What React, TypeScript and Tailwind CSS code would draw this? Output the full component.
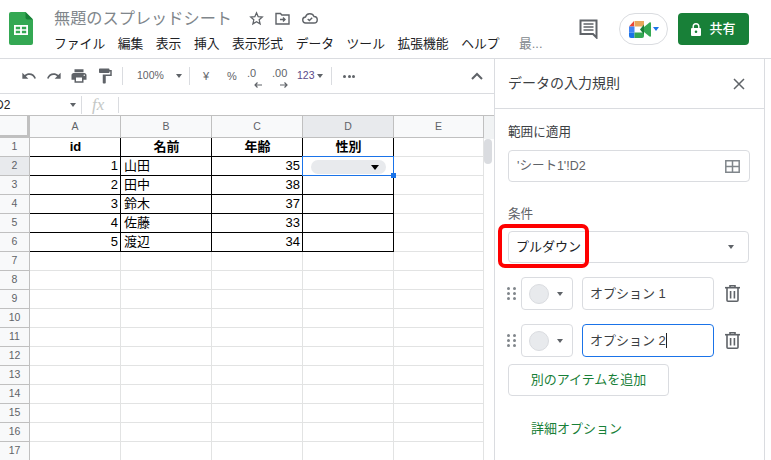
import React from "react";

const menus = ["ファイル", "編集", "表示", "挿入", "表示形式", "データ", "ツール", "拡張機能", "ヘルプ"];
const cols = ["A", "B", "C", "D", "E"];
const people: [string, string, string, string][] = [
  ["id", "名前", "年齢", "性別"],
  ["1", "山田", "35", ""],
  ["2", "田中", "38", ""],
  ["3", "鈴木", "37", ""],
  ["4", "佐藤", "33", ""],
  ["5", "渡辺", "34", ""],
];
const rowNums = Array.from({ length: 17 }, (_, i) => i + 1);

function Icon({ d, size = 16, className = "" }: { d: string; size?: number; className?: string }) {
  return (
    <svg width={size} height={size} viewBox="0 0 24 24" fill="currentColor" className={className}>
      <path d={d} />
    </svg>
  );
}

function Caret({ className = "" }: { className?: string }) {
  return <div className={`h-0 w-0 border-x-[3.5px] border-t-[4px] border-x-transparent ${className}`}></div>;
}

function SheetsLogo() {
  return (
    <svg width="24" height="33" viewBox="0 0 24 33">
      <path d="M2 0h14.5L24 7.5V31a2 2 0 0 1-2 2H2a2 2 0 0 1-2-2V2a2 2 0 0 1 2-2z" fill="#34a853" />
      <path d="M16.5 0L24 7.5h-5.5a2 2 0 0 1-2-2z" fill="#188038" />
      <path d="M5 13h14v10H5zm1.8 1.8v2.4h4.3v-2.4zm6.1 0v2.4h4.3v-2.4zm-6.1 4v2.4h4.3v-2.4zm6.1 0v2.4h4.3v-2.4z" fill="#fff" fillRule="evenodd" />
    </svg>
  );
}

function MeetLogo() {
  return (
    <svg width="22" height="17" viewBox="0 0 22 17">
      <path d="M5 0h10v5.5H5.5V0z" fill="#e8a75c" />
      <path d="M5 0v5.5H0z" fill="#ea4335" />
      <path d="M0 5.5h5.5v6H0z" fill="#4285f4" />
      <path d="M0 11.5h5.5V17H2a2 2 0 0 1-2-2z" fill="#1a73e8" />
      <path d="M5.5 11.5H15V15a2 2 0 0 1-2 2H5.5z" fill="#34a853" />
      <path d="M15 3.5v10l-4-5z" fill="#188038" />
      <path d="M15 6l5.5-4.5c.6-.4 1.5 0 1.5.8v12.4c0 .8-.9 1.2-1.5.8L15 11z" fill="#34a853" />
    </svg>
  );
}

function Trash() {
  return (
    <svg width="15" height="17" viewBox="0 0 15 17" fill="none" stroke="#5f6368" strokeWidth="1.6">
      <path d="M0 2.7h15" />
      <path d="M5 2.5V.8h5v1.7" />
      <path d="M2 3v12.2c0 .6.4 1 1 1h9c.6 0 1-.4 1-1V3" />
      <path d="M5.6 6v7.5M9.4 6v7.5" />
    </svg>
  );
}

function Dots() {
  return (
    <div className="grid w-[9px] grid-cols-2 gap-x-[2px] gap-y-[2px]">
      {[0, 1, 2, 3, 4, 5].map((i) => (
        <div key={i} className="h-[3px] w-[3px] rounded-full bg-[#80868b]"></div>
      ))}
    </div>
  );
}

function OptionRow({ label, focused }: { label: string; focused?: boolean }) {
  return (
    <div className="flex h-[33px] items-center pl-[12px]">
      <Dots />
      <div className="ml-[5px] flex h-[33px] w-[52px] items-center rounded-[4px] border border-[#dadce0] pl-[7px]">
        <div className="h-[20px] w-[20px] rounded-full border border-[#dadce0] bg-[#e8eaed]"></div>
        <Caret className="ml-[8px] border-t-[#5f6368]" />
      </div>
      <div
        className={`ml-[9px] flex h-[33px] w-[132px] items-center rounded-[4px] border pl-[7px] text-[13px] text-[#3c4043] ${
          focused ? "border-[#1a73e8]" : "border-[#dadce0]"
        }`}
      >
        {label}
        {focused && <div className="h-[15px] w-px bg-[#202124]"></div>}
      </div>
      <div className="ml-[11px]">
        <Trash />
      </div>
    </div>
  );
}

function Header() {
  return (
    <div className="flex h-[58px] shrink-0 items-start bg-white">
      <div className="ml-[9px] mt-[12px]">
        <SheetsLogo />
      </div>
      <div className="ml-[21px] flex-1">
        <div className="mt-[7px] flex h-[22px] items-center">
          <span className="text-[16.2px] leading-[22px] text-[#80868b]">無題のスプレッドシート</span>
          <svg width="15" height="15" viewBox="0 0 24 24" fill="none" stroke="#5f6368" strokeWidth="2" className="ml-[17px]">
            <path d="M12 3l2.7 6.1 6.6.6-5 4.4 1.5 6.5L12 17.2l-5.8 3.4 1.5-6.5-5-4.4 6.6-.6z" />
          </svg>
          <svg width="15" height="13" viewBox="0 0 15 13" fill="none" stroke="#5f6368" strokeWidth="1.4" className="ml-[11px]">
            <path d="M1 1.5h4.5l1.3 1.5H14v9H1z" />
            <path d="M5 7.5h4.5M8 5.5l2 2-2 2" />
          </svg>
          <svg width="16" height="12" viewBox="0 0 16 12" fill="none" stroke="#5f6368" strokeWidth="1.4" className="ml-[12px]">
            <path d="M4 11a3 3 0 0 1-.5-6A4.5 4.5 0 0 1 12 4.5a3.2 3.2 0 0 1 0 6.5z" />
            <path d="M5.7 7l1.7 1.5 2.8-2.8" />
          </svg>
        </div>
        <div className="mt-[5px] flex h-[20px] items-center gap-[12.5px] text-[12.8px] leading-[20px] text-[#202124]">
          {menus.map((m) => (
            <span key={m}>{m}</span>
          ))}
          <span className="ml-[7px] text-[#80868b]">最...</span>
        </div>
      </div>
      <div className="mt-[13px] flex items-center">
        <svg width="20" height="20" viewBox="0 0 20 20" fill="none">
          <path d="M1.5 1.5h16v17l-3.5-3.5H1.5z" stroke="#5f6368" strokeWidth="2" />
          <path d="M4.5 5h10M4.5 8h10M4.5 11h10" stroke="#5f6368" strokeWidth="1.5" />
        </svg>
        <div className="ml-[20px] flex h-[32px] w-[49px] items-center rounded-full border border-[#dadce0] pl-[9px]">
          <MeetLogo />
          <Caret className="ml-[2px] border-t-[#1a73e8]" />
        </div>
        <div className="ml-[10px] mr-[22px] flex h-[32px] w-[71px] items-center justify-center gap-[8px] rounded-[4px] bg-[#188038] text-[13px] font-medium text-white">
          <svg width="10" height="13" viewBox="0 0 10 13" fill="#fff">
            <path d="M1.5 5V3.5a3.5 3.5 0 0 1 7 0V5h.5a1 1 0 0 1 1 1v6a1 1 0 0 1-1 1H1a1 1 0 0 1-1-1V6a1 1 0 0 1 1-1zm1.4 0h4.2V3.5a2.1 2.1 0 0 0-4.2 0zM5 7.5a1.3 1.3 0 1 0 0 2.6 1.3 1.3 0 0 0 0-2.6z" fillRule="evenodd" />
          </svg>
          共有
        </div>
      </div>
    </div>
  );
}

function Arrow({ flip }: { flip?: boolean }) {
  return (
    <svg width="8" height="6" viewBox="0 0 8 6" fill="none" stroke="#5f6368" strokeWidth="1.2" className={`ml-auto ${flip ? "-scale-x-100" : ""}`}>
      <path d="M8 3H1M3.5.5L1 3l2.5 2.5" />
    </svg>
  );
}

function Toolbar() {
  return (
    <div className="flex h-[35px] shrink-0 items-center border-b border-[#dadce0] pl-[21px] text-[#5f6368]">
      <Icon size={16} d="M12.5 8c-2.65 0-5.05.99-6.9 2.6L2 7v9h9l-3.62-3.62c1.39-1.16 3.16-1.88 5.12-1.88 3.54 0 6.55 2.31 7.6 5.5l2.37-.78C21.08 11.03 17.15 8 12.5 8z" />
      <Icon size={16} className="ml-[9px]" d="M18.4 10.6C16.55 8.99 14.15 8 11.5 8c-4.65 0-8.58 3.03-9.96 7.22L3.9 16c1.05-3.19 4.05-5.5 7.6-5.5 1.95 0 3.73.72 5.12 1.88L13 16h9V7l-3.6 3.6z" />
      <Icon size={18} className="ml-[8px]" d="M19 8H5c-1.66 0-3 1.34-3 3v6h4v4h12v-4h4v-6c0-1.66-1.34-3-3-3zm-3 11H8v-5h8v5zm3-7c-.55 0-1-.45-1-1s.45-1 1-1 1 .45 1 1-.45 1-1 1zm-1-9H6v4h12V3z" />
      <Icon size={18} className="ml-[8px]" d="M18 4V3c0-.55-.45-1-1-1H5c-.55 0-1 .45-1 1v4c0 .55.45 1 1 1h12c.55 0 1-.45 1-1V6h1v4H9v11c0 .55.45 1 1 1h2c.55 0 1-.45 1-1v-9h8V4h-3z" />
      <div className="ml-[8px] h-[18px] w-px bg-[#dadce0]"></div>
      <span className="ml-[14px] w-[27px] text-[10.5px]">100%</span>
      <Caret className="ml-[12px] border-t-[#5f6368]" />
      <div className="ml-[7px] h-[18px] w-px bg-[#dadce0]"></div>
      <span className="ml-[11px] w-[10px] text-center text-[11px]">¥</span>
      <span className="ml-[15px] w-[12px] text-center text-[11px]">%</span>
      <div className="ml-[9px] flex h-[24px] w-[15px] flex-col text-[11px] leading-[18px]">
        <span>.0</span>
        <Arrow />
      </div>
      <div className="ml-[10px] flex h-[24px] w-[16px] flex-col text-[11px] leading-[18px]">
        <span>.00</span>
        <Arrow flip />
      </div>
      <span className="ml-[9px] w-[18px] text-[10.5px] text-[#5b4a8a]">123</span>
      <Caret className="ml-[2px] border-t-[#5f6368]" />
      <div className="ml-[8px] h-[18px] w-px bg-[#dadce0]"></div>
      <div className="ml-[11px] flex gap-[1.5px]">
        {[0, 1, 2].map((i) => (
          <div key={i} className="h-[3px] w-[3px] rounded-full bg-[#5f6368]"></div>
        ))}
      </div>
      <svg width="12" height="8" viewBox="0 0 12 8" fill="none" stroke="#5f6368" strokeWidth="2" className="ml-[116px]">
        <path d="M1 7l5-5 5 5" />
      </svg>
    </div>
  );
}

function FormulaBar() {
  return (
    <div className="flex h-[22px] shrink-0 items-center border-b border-[#c0c0c0] text-[12px] text-[#202124]">
      <div className="flex w-[82px] items-center overflow-hidden border-r border-[#dadce0]">
        <span className="-ml-[5px] w-[75px] leading-[18px]">D2</span>
        <Caret className="border-t-[#5f6368]" />
      </div>
      <span className="ml-[10px] w-[26px] font-['Liberation_Serif',serif] text-[17px] italic leading-[18px] text-[#c4c7c5]">fx</span>
      <div className="h-[16px] w-px bg-[#dadce0]"></div>
    </div>
  );
}

function SheetGrid() {
  return (
    <div className="flex min-h-0 flex-1 overflow-hidden">
      <div className="grid flex-1 grid-cols-[30px_91px_91px_91px_91px_90px] grid-rows-[22px] auto-rows-[19px] content-start">
        <div className="border-b-[3px] border-r-[3px] border-[#c0c0c0] bg-[#f8f9fa]"></div>
        {cols.map((c) => (
          <div
            key={c}
            className={`flex items-center justify-center border-b border-r border-[#c0c0c0] text-[10.5px] text-[#5f6368] ${
              c === "D" ? "bg-[#e8eaed]" : "bg-[#f8f9fa]"
            }`}
          >
            {c}
          </div>
        ))}
        {rowNums.map((n) => (
          <React.Fragment key={n}>
            <div
              className={`flex items-center justify-center border-b border-r border-[#c0c0c0] text-[10.5px] text-[#5f6368] ${
                n === 2 ? "bg-[#e8eaed]" : "bg-[#f8f9fa]"
              }`}
            >
              {n}
            </div>
            {cols.map((c, ci) => {
              const row = n <= 6 && ci < 4 ? people[n - 1] : null;
              const text = row ? row[ci] : "";
              const head = n === 1;
              const isNum = ci === 0 || ci === 2;
              const selected = n === 2 && c === "D";
              return (
                <div
                  key={c}
                  className={`relative flex items-center border-b border-r pl-[3px] pr-[2px] text-[13px] leading-[18px] text-black ${
                    row ? "border-black" : "border-[#e2e3e3]"
                  } ${head ? "justify-center font-bold" : isNum ? "justify-end" : "justify-start"} ${selected ? "z-10" : ""}`}
                >
                  {text}
                  {selected && (
                    <>
                      <div className="absolute -bottom-px -left-px -right-px -top-px border border-[#1a73e8]"></div>
                      <div className="absolute left-[8px] top-[3px] flex h-[14px] w-[75px] items-center justify-end rounded-full bg-[#e8eaed] pr-[7px]">
                        <div className="h-0 w-0 border-x-[4px] border-t-[5px] border-x-transparent border-t-black"></div>
                      </div>
                      <div className="absolute -bottom-[3px] -right-[3px] h-[5px] w-[5px] bg-[#1a73e8]"></div>
                    </>
                  )}
                </div>
              );
            })}
          </React.Fragment>
        ))}
      </div>
      <div className="w-[10px] shrink-0 bg-white">
        <div className="h-[23px] bg-[#f1f3f4]"></div>
        <div className="h-[25px] w-[8px] rounded-full bg-[#dadce0]"></div>
      </div>
    </div>
  );
}

function Panel() {
  return (
    <div className="relative h-full w-[271px] shrink-0 border-x border-[#dadce0] bg-white">
      <div className="flex h-[50px] items-center justify-between border-b border-[#dadce0] pl-[13px] pr-[19px] text-[14px] text-[#3c4043]">
        データの入力規則
        <svg width="12" height="12" viewBox="0 0 12 12" stroke="#5f6368" strokeWidth="1.5">
          <path d="M1 1l10 10M11 1L1 11" />
        </svg>
      </div>
      <div className="px-[13px]">
        <div className="mt-[13px] h-[20px] text-[12.6px] leading-[20px] text-[#3c4043]">範囲に適用</div>
        <div className="mt-[8px] flex h-[32px] w-[242px] items-center justify-between rounded-[4px] border border-[#dadce0] pl-[8px] pr-[9px] text-[12.5px] text-[#5f6368]">
          'シート1'!D2
          <svg width="15" height="13" viewBox="0 0 15 13" fill="none" stroke="#80868b" strokeWidth="1.5">
            <path d="M.8.8h13.4v11.4H.8zM7.5.8v11.4M.8 6.5h13.4" />
          </svg>
        </div>
        <div className="mt-[22px] h-[20px] text-[12.6px] leading-[20px] text-[#5f6368]">条件</div>
        <div className="mt-[7px] flex h-[32px] w-[241px] items-center justify-between rounded-[4px] border border-[#dadce0] pl-[7px] pr-[14px] text-[13px] text-[#202124]">
          プルダウン
          <Caret className="border-t-[#5f6368]" />
        </div>
      </div>
      <div className="mt-[14px] flex flex-col gap-[14px]">
        <OptionRow label="オプション 1" />
        <OptionRow label="オプション 2" focused />
      </div>
      <div className="ml-[13px] mt-[7px] flex h-[32px] w-[161px] items-center justify-center rounded-[4px] border border-[#dadce0] text-[13px] text-[#188038]">
        別のアイテムを追加
      </div>
      <div className="ml-[36px] mt-[23px] text-[13px] leading-[20px] text-[#188038]">詳細オプション</div>
      <div className="absolute left-[3px] top-[165px] h-[44px] w-[91px] rounded-[7px] border-[4px] border-[#fe0000]"></div>
    </div>
  );
}

export default function App() {
  return (
    <div className="flex h-[460px] w-[771px] flex-col overflow-hidden bg-white font-['Liberation_Sans','Noto_Sans_CJK_JP',sans-serif]">
      <Header />
      <div className="flex min-h-0 flex-1 border-t border-[#dadce0]">
        <div className="flex h-full w-[494px] shrink-0 flex-col">
          <Toolbar />
          <FormulaBar />
          <SheetGrid />
        </div>
        <Panel />
      </div>
    </div>
  );
}
